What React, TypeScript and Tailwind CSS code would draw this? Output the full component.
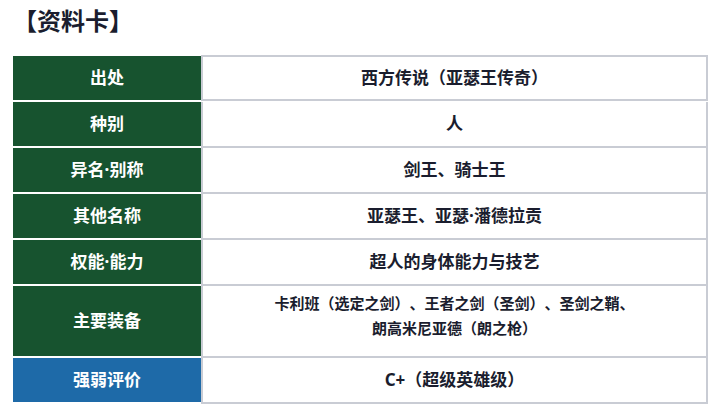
const font = { fontFamily: '"Noto Sans", "Noto Sans CJK SC", sans-serif' };

type Row = { label: string; value: string[]; tall?: boolean; blue?: boolean };

const rows: Row[] = [
  { label: '出处', value: ['西方传说（亚瑟王传奇）'] },
  { label: '种别', value: ['人'] },
  { label: '异名·别称', value: ['剑王、骑士王'] },
  { label: '其他名称', value: ['亚瑟王、亚瑟·潘德拉贡'] },
  { label: '权能·能力', value: ['超人的身体能力与技艺'] },
  {
    label: '主要装备',
    value: ['卡利班（选定之剑）、王者之剑（圣剑）、圣剑之鞘、', '朗高米尼亚德（朗之枪）'],
    tall: true,
  },
  { label: '强弱评价', value: ['C+（超级英雄级）'], blue: true },
];

export default function App() {
  return (
    <div className="w-[720px] h-[416px] bg-white overflow-hidden [text-spacing-trim:space-all]" style={font}>
      {/* Title */}
      <h1 className="pl-[13px] pt-[5px] text-[24px] leading-[32px] font-bold text-[#1a1d2e]">【资料卡】</h1>

      {/* Card table */}
      <div className="ml-[13px] mt-[19px] w-[695px]">
        {rows.map((row, i) => (
          <div key={i} className="flex">
            <div
              className={`w-[188px] shrink-0 flex items-center justify-center border-b-2 border-white text-white text-[17px] font-bold ${
                row.tall ? 'h-[72px]' : 'h-[46px]'
              } ${row.blue ? 'bg-[#1e6aa8]' : 'bg-[#17532f]'}`}
            >
              {row.label}
            </div>
            <div
              className={`flex-1 flex flex-col items-center justify-center border-x-2 border-b-2 border-[#c9ccd4] font-bold text-[#1a1d2e] ${
                i === 0 ? 'border-t-2 -mt-[1px]' : ''
              } ${row.tall ? 'h-[72px] text-[15px] leading-[25px] pb-[10px]' : 'h-[46px] text-[17px]'}`}
            >
              {row.value.map((line, j) => (
                <div key={j}>{line}</div>
              ))}
            </div>
          </div>
        ))}
      </div>
    </div>
  );
}
